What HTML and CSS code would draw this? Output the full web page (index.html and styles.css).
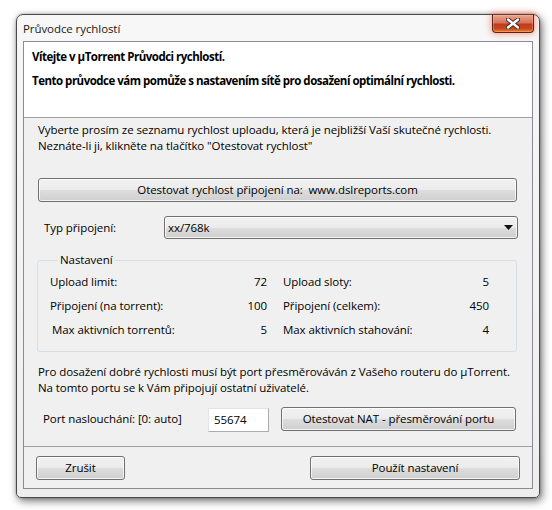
FILE: index.html
```html
<!DOCTYPE html>
<html lang="cs">
<head>
<meta charset="utf-8">
<title>Průvodce rychlostí</title>
<link rel="stylesheet" href="styles.css">
</head>
<body>
<div class="window">
  <div class="titlebar"><span class="title">Průvodce rychlostí</span></div>
  <div class="close">
    <svg width="14" height="11" viewBox="0 0 14 11">
      <path d="M2 1.5 L12 9.5 M12 1.5 L2 9.5" stroke="#3a2a26" stroke-width="4.2" stroke-linecap="round"/>
      <path d="M2 1.5 L12 9.5 M12 1.5 L2 9.5" stroke="#ffffff" stroke-width="2.4" stroke-linecap="round"/>
    </svg>
  </div>
  <div class="client">
    <div class="header">
      <p>Vítejte v µTorrent Průvodci rychlostí.</p>
      <p>Tento průvodce vám pomůže s nastavením sítě pro dosažení optimální rychlosti.</p>
    </div>
    <div class="content">
      <p class="intro">Vyberte prosím ze seznamu rychlost uploadu, která je nejbližší Vaší skutečné rychlosti.<br>Neznáte-li ji, klikněte na tlačítko "Otestovat rychlost"</p>
      <div class="btn wide">Otestovat rychlost připojení na:&nbsp; www.dslreports.com</div>
      <div class="typerow">
        <span class="typelabel">Typ připojení:</span>
        <div class="combo"><span>xx/768k</span>
          <svg width="9" height="5" viewBox="0 0 9 5"><path d="M0 0 H9 L4.5 5 Z" fill="#111"/></svg>
        </div>
      </div>
      <fieldset class="group">
        <legend>Nastavení</legend>
        <div class="grid">
          <div class="pair"><span>Upload limit:</span><span>72</span></div>
          <div class="pair"><span>Upload sloty:</span><span>5</span></div>
          <div class="pair"><span>Připojení (na torrent):</span><span>100</span></div>
          <div class="pair"><span>Připojení (celkem):</span><span>450</span></div>
          <div class="pair shift"><span>Max aktivních torrentů:</span><span>5</span></div>
          <div class="pair"><span>Max aktivních stahování:</span><span>4</span></div>
        </div>
      </fieldset>
      <p class="info">Pro dosažení dobré rychlosti musí být port přesměrováván z Vašeho routeru do µTorrent.<br>Na tomto portu se k Vám připojují ostatní uživatelé.</p>
      <div class="portrow">
        <span class="portlabel">Port naslouchání: [0: auto]</span>
        <div class="textbox">55674</div>
        <div class="btn nat">Otestovat NAT - přesměrování portu</div>
      </div>
    </div>
    <div class="footer">
      <div class="btn cancel">Zrušit</div>
      <div class="btn apply">Použít nastavení</div>
    </div>
  </div>
</div>
</body>
</html>
```

FILE: styles.css
```css
html, body {
  margin: 0;
  padding: 0;
  background: #ffffff;
}
body {
  width: 552px;
  height: 510px;
  overflow: hidden;
  font-family: "Open Sans", "Noto Sans", sans-serif;
  font-size: 11.5px;
  letter-spacing: -0.08px;
  color: #000;
}
p { margin: 0; }

.window {
  position: relative;
  box-sizing: border-box;
  width: 524px;
  height: 484px;
  margin: 14px 0 0 16px;
  border: 1px solid #4a4a4a;
  border-radius: 7px 7px 5px 5px;
  background: linear-gradient(#f7f7f7, #eeeeee);
  box-shadow: 2px 3px 9px rgba(0, 0, 0, 0.55), 0 0 3px rgba(0,0,0,0.25);
  padding: 0 6px 8px 6px;
}
.titlebar {
  height: 26px;
  display: flex;
  align-items: center;
}
.title {
  color: #1a1a1a;
  padding-top: 1px;
}
.close {
  position: absolute;
  top: -1px;
  right: 5px;
  width: 42px;
  height: 19px;
  box-sizing: border-box;
  border: 1px solid #5b2317;
  border-top-color: #6a3a30;
  border-radius: 0 0 4px 4px;
  background: linear-gradient(#eaa58f 0%, #d8735a 45%, #c23a1d 55%, #c9451e 80%, #e8872c 100%);
  box-shadow: 0 0 6px 1px rgba(240, 80, 40, 0.55), inset 0 0 0 1px rgba(255, 200, 180, 0.35);
  display: flex;
  align-items: center;
  justify-content: center;
}

.client {
  box-sizing: border-box;
  width: 510px;
  height: 448px;
  border: 1px solid #898c95;
  background: #f0f0f0;
  display: flex;
  flex-direction: column;
}
.header {
  background: #ffffff;
  border-bottom: 1px solid #a0a0a0;
  padding: 7px 0 0 8px;
  box-sizing: border-box;
  height: 76px;
  font-weight: bold;
  letter-spacing: -0.5px;
  line-height: 16px;
  display: flex;
  flex-direction: column;
  gap: 8px;
}

.content {
  height: 328px;
  box-sizing: border-box;
  padding: 4px 0 0 14px;
  display: flex;
  flex-direction: column;
  line-height: 16px;
}
.intro { height: 32px; }

.btn {
  box-sizing: border-box;
  height: 24px;
  border: 1px solid #707070;
  border-radius: 3px;
  background: linear-gradient(#f2f2f2 0%, #ebebeb 50%, #dddddd 51%, #cfcfcf 100%);
  box-shadow: inset 0 0 0 1px rgba(255,255,255,0.75);
  display: flex;
  align-items: center;
  justify-content: center;
  line-height: 16px;
}
.wide {
  width: 479px;
  margin-top: 24px;
}

.typerow {
  margin-top: 14px;
  height: 23px;
  display: flex;
  align-items: center;
}
.typelabel {
  box-sizing: border-box;
  width: 126px;
  padding-left: 6px;
}
.combo {
  box-sizing: border-box;
  width: 354px;
  height: 23px;
  border: 1px solid #707070;
  border-radius: 3px;
  background: linear-gradient(#f2f2f2 0%, #ebebeb 50%, #dddddd 51%, #cfcfcf 100%);
  box-shadow: inset 0 0 0 1px rgba(255,255,255,0.75);
  display: flex;
  align-items: center;
  justify-content: space-between;
  padding: 0 4px 0 3px;
}

.group {
  margin: 13px 0 0 -1px;
  width: 480px;
  box-sizing: border-box;
  border: 1px solid #d5dfe5;
  border-radius: 3px;
  padding: 6px 26px 13px 12px;
  min-inline-size: 0;
}
.group legend {
  margin-left: 8px;
  padding: 0 2px;
  line-height: 16px;
}
.grid {
  display: grid;
  grid-template-columns: 217px 206px;
  column-gap: 16px;
  row-gap: 8px;
}
.pair {
  display: flex;
  justify-content: space-between;
  line-height: 16px;
}
.pair.shift span:first-child { padding-left: 2px; }

.info {
  margin-top: 12px;
  height: 32px;
}

.portrow {
  margin-top: 11px;
  height: 24px;
  display: flex;
  align-items: center;
}
.portlabel {
  box-sizing: border-box;
  width: 170px;
  padding-left: 5px;
}
.textbox {
  box-sizing: border-box;
  width: 61px;
  height: 24px;
  margin-top: 2px;
  border: 1px solid #abadb3;
  border-top-color: #e2e3ea;
  border-left-color: #e2e3ea;
  background: #fff;
  padding-left: 5px;
  display: flex;
  align-items: center;
}
.nat {
  width: 235px;
  margin-left: 12px;
}

.footer {
  flex: 1;
  border-top: 1px solid #a0a0a0;
  padding: 9px 0 0 12px;
  display: flex;
  align-items: flex-start;
}
.cancel { width: 89px; }
.apply { width: 210px; margin-left: 185px; }
```
